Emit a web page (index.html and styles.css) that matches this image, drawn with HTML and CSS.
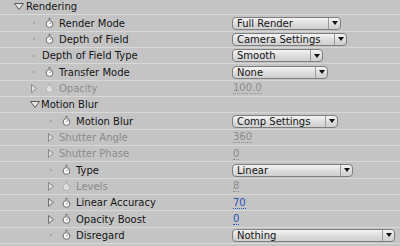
FILE: index.html
```html
<!DOCTYPE html>
<html>
<head>
<meta charset="UTF-8">
<title>Rendering</title>
<link rel="stylesheet" href="styles.css">
</head>
<body>
<div class="panel">
	<div class="row">
		<div class="name lv0">
			<svg class="tw-open" width="10" height="7" viewBox="0 0 10 7"><path d="M0.5 0.5 H9.5 L5 6.5 Z"/></svg>
			<span>Rendering</span>
		</div>
	</div>
	<div class="row">
		<div class="name lv1">
			<i class="dot"></i>
			<svg class="watch" width="9" height="10" viewBox="0 0 9 10"><rect x="3.5" y="0" width="2" height="1.5"/><circle cx="4.5" cy="6" r="3.4"/><path d="M4.5 6 L6.3 4.2"/></svg>
			<span>Render Mode</span>
		</div>
		<div class="drop w109"><span>Full Render</span><b class="arr"></b></div>
	</div>
	<div class="row">
		<div class="name lv1">
			<i class="dot"></i>
			<svg class="watch" width="9" height="10" viewBox="0 0 9 10"><rect x="3.5" y="0" width="2" height="1.5"/><circle cx="4.5" cy="6" r="3.4"/><path d="M4.5 6 L6.3 4.2"/></svg>
			<span>Depth of Field</span>
		</div>
		<div class="drop w115"><span>Camera Settings</span><b class="arr"></b></div>
	</div>
	<div class="row">
		<div class="name lv1 plain">
			<i class="dot"></i>
			<span>Depth of Field Type</span>
		</div>
		<div class="drop w91"><span>Smooth</span><b class="arr"></b></div>
	</div>
	<div class="row">
		<div class="name lv1">
			<i class="dot"></i>
			<svg class="watch" width="9" height="10" viewBox="0 0 9 10"><rect x="3.5" y="0" width="2" height="1.5"/><circle cx="4.5" cy="6" r="3.4"/><path d="M4.5 6 L6.3 4.2"/></svg>
			<span>Transfer Mode</span>
		</div>
		<div class="drop w96"><span>None</span><b class="arr"></b></div>
	</div>
	<div class="row off">
		<div class="name lv1">
			<svg class="tw-shut" width="6" height="9" viewBox="0 0 6 9"><path d="M0.5 0.5 L5.5 4.5 L0.5 8.5 Z"/></svg>
			<svg class="watch" width="9" height="10" viewBox="0 0 9 10"><rect x="3.5" y="0" width="2" height="1.5"/><circle cx="4.5" cy="6" r="3.4"/><path d="M4.5 6 L6.3 4.2"/></svg>
			<span>Opacity</span>
		</div>
		<div class="val">100.0</div>
	</div>
	<div class="row">
		<div class="name lv1g">
			<svg class="tw-open" width="10" height="7" viewBox="0 0 10 7"><path d="M0.5 0.5 H9.5 L5 6.5 Z"/></svg>
			<span>Motion Blur</span>
		</div>
	</div>
	<div class="row">
		<div class="name lv2">
			<i class="dot"></i>
			<svg class="watch" width="9" height="10" viewBox="0 0 9 10"><rect x="3.5" y="0" width="2" height="1.5"/><circle cx="4.5" cy="6" r="3.4"/><path d="M4.5 6 L6.3 4.2"/></svg>
			<span>Motion Blur</span>
		</div>
		<div class="drop w106"><span>Comp Settings</span><b class="arr"></b></div>
	</div>
	<div class="row off">
		<div class="name lv2 plain">
			<svg class="tw-shut" width="6" height="9" viewBox="0 0 6 9"><path d="M0.5 0.5 L5.5 4.5 L0.5 8.5 Z"/></svg>
			<span>Shutter Angle</span>
		</div>
		<div class="val">360</div>
	</div>
	<div class="row off">
		<div class="name lv2 plain">
			<svg class="tw-shut" width="6" height="9" viewBox="0 0 6 9"><path d="M0.5 0.5 L5.5 4.5 L0.5 8.5 Z"/></svg>
			<span>Shutter Phase</span>
		</div>
		<div class="val">0</div>
	</div>
	<div class="row">
		<div class="name lv2">
			<i class="dot"></i>
			<svg class="watch" width="9" height="10" viewBox="0 0 9 10"><rect x="3.5" y="0" width="2" height="1.5"/><circle cx="4.5" cy="6" r="3.4"/><path d="M4.5 6 L6.3 4.2"/></svg>
			<span>Type</span>
		</div>
		<div class="drop w121"><span>Linear</span><b class="arr"></b></div>
	</div>
	<div class="row off">
		<div class="name lv2">
			<svg class="tw-shut" width="6" height="9" viewBox="0 0 6 9"><path d="M0.5 0.5 L5.5 4.5 L0.5 8.5 Z"/></svg>
			<svg class="watch" width="9" height="10" viewBox="0 0 9 10"><rect x="3.5" y="0" width="2" height="1.5"/><circle cx="4.5" cy="6" r="3.4"/><path d="M4.5 6 L6.3 4.2"/></svg>
			<span>Levels</span>
		</div>
		<div class="val">8</div>
	</div>
	<div class="row">
		<div class="name lv2">
			<svg class="tw-shut" width="6" height="9" viewBox="0 0 6 9"><path d="M0.5 0.5 L5.5 4.5 L0.5 8.5 Z"/></svg>
			<svg class="watch" width="9" height="10" viewBox="0 0 9 10"><rect x="3.5" y="0" width="2" height="1.5"/><circle cx="4.5" cy="6" r="3.4"/><path d="M4.5 6 L6.3 4.2"/></svg>
			<span>Linear Accuracy</span>
		</div>
		<div class="val blue">70</div>
	</div>
	<div class="row">
		<div class="name lv2">
			<svg class="tw-shut" width="6" height="9" viewBox="0 0 6 9"><path d="M0.5 0.5 L5.5 4.5 L0.5 8.5 Z"/></svg>
			<svg class="watch" width="9" height="10" viewBox="0 0 9 10"><rect x="3.5" y="0" width="2" height="1.5"/><circle cx="4.5" cy="6" r="3.4"/><path d="M4.5 6 L6.3 4.2"/></svg>
			<span>Opacity Boost</span>
		</div>
		<div class="val blue">0</div>
	</div>
	<div class="row">
		<div class="name lv2">
			<i class="dot"></i>
			<svg class="watch" width="9" height="10" viewBox="0 0 9 10"><rect x="3.5" y="0" width="2" height="1.5"/><circle cx="4.5" cy="6" r="3.4"/><path d="M4.5 6 L6.3 4.2"/></svg>
			<span>Disregard</span>
		</div>
		<div class="drop w163"><span>Nothing</span><b class="arr"></b></div>
	</div>
</div>
</body>
</html>
```

FILE: styles.css
```css
html, body {
	margin : 0;
	background : #c4c4c4;
	overflow : hidden;
}
.panel {
	margin-top : -1px;
	font-family : "DejaVu Sans", sans-serif;
	font-size : 10px;
	color : #141414;
}
.row {
	display : flex;
	align-items : center;
	height : 16.35px;
	box-sizing : border-box;
	border-bottom : 1px solid #d8d8d8;
}
.name {
	width : 232px;
	flex : none;
	display : flex;
	align-items : center;
	box-sizing : border-box;
	white-space : nowrap;
}
.lv0 { padding-left : 14px; }
.lv1 { padding-left : 31px; }
.lv1g { padding-left : 30px; }
.lv2 { padding-left : 48px; }

.tw-open {
	margin-right : 2px;
}
.lv1g .tw-open { margin-right : 1px; }
.tw-open path {
	fill : #e6e6e6;
	stroke : #5a5a5a;
}
.tw-shut {
	margin-right : 8px;
}
.tw-shut path {
	fill : #dedede;
	stroke : #707070;
}
.dot {
	display : block;
	width : 6px;
	height : 2px;
	margin-right : 8px;
	background : linear-gradient(to right, transparent 2px, #a8a8a8 2px, #a8a8a8 4px, transparent 4px);
}
.plain .dot, .plain .tw-shut {
	margin-right : 5px;
}
.watch {
	margin-right : 5px;
}
.watch rect { fill : #6e6e6e; }
.watch circle {
	fill : #fafafa;
	stroke : #6e6e6e;
}
.watch path {
	stroke : #6e6e6e;
	fill : none;
}
.off { color : #8c8c8c; }
.off .watch rect { fill : #b0b0b0; }
.off .watch circle { stroke : #b0b0b0; fill : #e4e4e4; }
.off .watch path { stroke : #b0b0b0; }
.off .tw-shut path { stroke : #8a8a8a; }

.val {
	margin-left : 1px;
	line-height : 11px;
	border-bottom : 1px dotted currentColor;
}
.blue { color : #2656b4; }

.drop {
	display : flex;
	align-items : center;
	height : 13px;
	box-sizing : border-box;
	border : 1px solid #7e7e7e;
	border-radius : 4px;
	background : linear-gradient(#f4f4f4, #dadada 60%, #cfcfcf);
}
.drop span {
	flex : 1;
	padding-left : 4px;
	line-height : 11px;
}
.arr {
	width : 11px;
	height : 100%;
	border-left : 1px solid #9a9a9a;
	display : flex;
	align-items : center;
	justify-content : center;
}
.arr::after {
	content : '';
	border-left : 3px solid transparent;
	border-right : 3px solid transparent;
	border-top : 4px solid #111;
}
.w91 { width : 91px; }
.w96 { width : 96px; }
.w106 { width : 106px; }
.w109 { width : 109px; }
.w115 { width : 115px; }
.w121 { width : 121px; }
.w163 { width : 163px; }
```
